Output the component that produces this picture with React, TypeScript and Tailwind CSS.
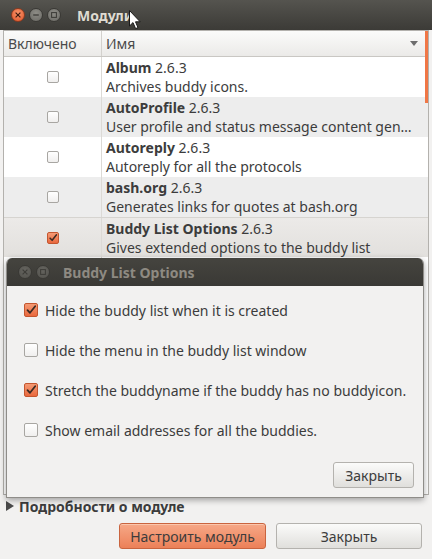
import React from "react";

const plugins = [
  { name: "Album", desc: "Archives buddy icons.", on: false, bg: "bg-white" },
  { name: "AutoProfile", desc: "User profile and status message content gen…", on: false, bg: "bg-[#ededed]" },
  { name: "Autoreply", desc: "Autoreply for all the protocols", on: false, bg: "bg-white" },
  { name: "bash.org", desc: "Generates links for quotes at bash.org", on: false, bg: "bg-[#ededed]" },
  { name: "Buddy List Options", desc: "Gives extended options to the buddy list", on: true, bg: "bg-gradient-to-b from-[#eceae8] to-[#e2e0dd] border-t border-[#d6d4d0]" },
];

const options = [
  { label: "Hide the buddy list when it is created", on: true },
  { label: "Hide the menu in the buddy list window", on: false },
  { label: "Stretch the buddyname if the buddy has no buddyicon.", on: true },
  { label: "Show email addresses for all the buddies.", on: false },
];

function Check({ on, size }: { on: boolean; size: "sm" | "md" }) {
  const box = size === "sm" ? "w-[12px] h-[12px]" : "w-[14px] h-[14px]";
  if (!on)
    return (
      <span className={`${box} shrink-0 rounded-[2px] border border-[#a8a6a2] bg-gradient-to-b from-white to-[#f0efee]`} />
    );
  return (
    <span className={`${box} shrink-0 rounded-[2px] border border-[#c4562f] bg-gradient-to-b from-[#f49a74] to-[#e9683d] flex items-center justify-center`}>
      <svg viewBox="0 0 12 12" className="w-full h-full">
        <path d="M2.5 6.2 L5 8.8 L10.2 2.2" fill="none" stroke="#3a2a22" strokeWidth="1.8" strokeLinecap="round" strokeLinejoin="round" />
      </svg>
    </span>
  );
}

function WinButton({ kind, active }: { kind: "close" | "min" | "max"; active: boolean }) {
  const bg =
    kind === "close" && active
      ? "bg-[radial-gradient(circle_at_50%_35%,#f8946a,#e0552a)] border-[#8c3a1f]"
      : active
      ? "bg-[radial-gradient(circle_at_50%_35%,#8d8c86,#6b6a65)] border-[#3a3935]"
      : "bg-[radial-gradient(circle_at_50%_35%,#64635e,#54534e)] border-[#3a3935]";
  const ink = kind === "close" && active ? "#3b1a10" : active ? "#3c3b37" : "#3e3d39";
  return (
    <span className={`w-[14px] h-[14px] rounded-full border ${bg} flex items-center justify-center`}>
      <svg viewBox="0 0 10 10" className="w-[8px] h-[8px]">
        {kind === "close" && <path d="M2 2 L8 8 M8 2 L2 8" stroke={ink} strokeWidth="1.5" />}
        {kind === "min" && <path d="M1.5 5 H8.5" stroke={ink} strokeWidth="1.6" />}
        {kind === "max" && <rect x="2" y="2" width="6" height="6" fill="none" stroke={ink} strokeWidth="1.3" />}
      </svg>
    </span>
  );
}

export default function App() {
  return (
    <div
      className="relative w-[432px] h-[559px] overflow-hidden bg-[#f2f1f0] text-[14px] text-[#3c3c3c] flex flex-col"
      style={{ fontFamily: '"Noto Sans", "DejaVu Sans", sans-serif' }}
    >
      {/* title bar */}
      <div className="h-[30px] shrink-0 bg-gradient-to-b from-[#55544f] to-[#3c3b37] flex items-center pl-[11px]">
        <div className="flex items-center gap-[4px]">
          <WinButton kind="close" active />
          <WinButton kind="min" active />
          <WinButton kind="max" active />
        </div>
        <span className="ml-[16px] font-bold text-[#dfdbd2]">Модули</span>
      </div>

      {/* plugin list */}
      <div className="relative mx-[3px] h-[465px] shrink-0 border border-[#b3b1ad] bg-white overflow-hidden">
        <div className="h-[26px] flex border-b border-[#c9c7c3] bg-gradient-to-b from-[#fbfbfa] to-[#ebeae8] text-[#4a4a4a]">
          <div className="w-[98px] border-r border-[#d3d1cd] pl-[4px] flex items-center">Включено</div>
          <div className="flex-1 pl-[4px] pr-[10px] flex items-center justify-between">
            <span>Имя</span>
            <svg viewBox="0 0 8 6" className="w-[8px] h-[6px]">
              <path d="M0 0 H8 L4 5 Z" fill="#6d6d6d" />
            </svg>
          </div>
        </div>
        {plugins.map((p) => (
          <div key={p.name} className={`h-[40px] flex ${p.bg}`}>
            <div className="w-[98px] border-r border-[#dcdad6] flex items-center justify-center">
              <Check on={p.on} size="sm" />
            </div>
            <div className="flex-1 pl-[4px] flex flex-col justify-center leading-[19px] whitespace-nowrap overflow-hidden">
              <span>
                <b>{p.name}</b> 2.6.3
              </span>
              <span>{p.desc}</span>
            </div>
          </div>
        ))}
        <div className="h-[40px] flex bg-white">
          <div className="w-[98px] border-r border-[#dcdad6]" />
        </div>
        <span className="absolute right-[0px] top-[0px] w-[3px] h-[72px] bg-[#f07746]" />
      </div>

      {/* details expander */}
      <div className="h-[22px] shrink-0 flex items-center pl-[6px] gap-[5px] font-bold text-[#3c3c3c]">
        <svg viewBox="0 0 8 10" className="w-[8px] h-[10px]">
          <path d="M0 0 L8 5 L0 10 Z" fill="#4a4a4a" />
        </svg>
        <span>Подробности о модуле</span>
      </div>

      {/* bottom buttons */}
      <div className="mt-[6px] flex justify-end gap-[10px] pr-[10px]">
        <button className="w-[147px] h-[26px] rounded-[3px] border border-[#c9643f] bg-gradient-to-b from-[#f6a887] to-[#ec8058] text-[#3c3c3c] shadow-[inset_0_1px_0_#fbc6ad]">
          Настроить модуль
        </button>
        <button className="w-[146px] h-[26px] rounded-[3px] border border-[#b4b2ae] bg-gradient-to-b from-[#fbfbfa] to-[#e0dfdc] text-[#3c3c3c]">
          Закрыть
        </button>
      </div>

      {/* Buddy List Options dialog */}
      <div className="absolute left-[6px] top-[258px] w-[418px] h-[240px] rounded-t-[6px] overflow-hidden border-x border-b border-[#8f8d89] bg-[#f2f1f0] flex flex-col shadow-[0_2px_6px_rgba(0,0,0,0.35)]">
        <div className="h-[28px] shrink-0 bg-gradient-to-b from-[#45443f] to-[#3a3935] flex items-center pl-[11px]">
          <div className="flex items-center gap-[4px]">
            <WinButton kind="close" active={false} />
            <WinButton kind="max" active={false} />
          </div>
          <span className="ml-[13px] font-bold text-[#8e8a82]">Buddy List Options</span>
        </div>
        <div className="flex flex-col pl-[17px] pt-[4px]">
          {options.map((o) => (
            <div key={o.label} className="h-[40px] flex items-center gap-[7px]">
              <Check on={o.on} size="md" />
              <span>{o.label}</span>
            </div>
          ))}
        </div>
        <div className="mt-auto mb-[9px] mr-[9px] flex justify-end">
          <button className="w-[81px] h-[26px] rounded-[3px] border border-[#b4b2ae] bg-gradient-to-b from-[#fbfbfa] to-[#e0dfdc] text-[#3c3c3c]">
            Закрыть
          </button>
        </div>
      </div>

      {/* mouse pointer */}
      <svg viewBox="0 0 12 20" className="absolute left-[129px] top-[10px] w-[12px] h-[20px]">
        <path d="M0.5 0.5 L0.5 16 L4 12.6 L6.6 18.6 L9 17.6 L6.5 11.8 L11.2 11.8 Z" fill="#ffffff" stroke="#1a1a1a" strokeWidth="1" strokeLinejoin="round" />
      </svg>
    </div>
  );
}
